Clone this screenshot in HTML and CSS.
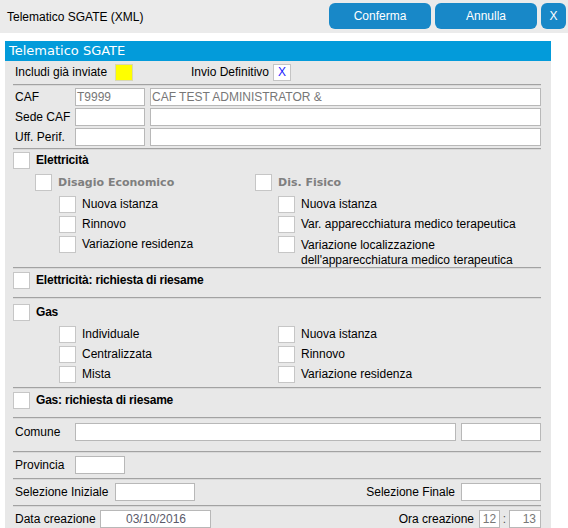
FILE: index.html
```html
<!DOCTYPE html>
<html lang="it">
<head>
<meta charset="utf-8">
<title>Telematico SGATE (XML)</title>
<link rel="stylesheet" href="styles.css">
</head>
<body>
<div class="topbar">
  <div class="title">Telematico SGATE (XML)</div>
  <div class="buttons">
    <button class="btn btn-wide">Conferma</button>
    <button class="btn btn-wide">Annulla</button>
    <button class="btn btn-x">X</button>
  </div>
</div>

<div class="panel">
  <div class="panel-head">Telematico SGATE</div>
  <div class="panel-body">
    <div class="row row-first">
      <span class="lbl w-includi">Includi già inviate</span>
      <span class="box box-yellow"></span>
      <span class="lbl w-invio">Invio Definitivo</span>
      <span class="box box-x">X</span>
    </div>
    <div class="sep sep-a"></div>

    <div class="fields">
      <div class="frow">
        <span class="flabel">CAF</span>
        <span class="inp inp-code">T9999</span>
        <span class="inp inp-grow">CAF TEST ADMINISTRATOR &amp;</span>
      </div>
      <div class="frow">
        <span class="flabel">Sede CAF</span>
        <span class="inp inp-code"></span>
        <span class="inp inp-grow"></span>
      </div>
      <div class="frow">
        <span class="flabel">Uff. Perif.</span>
        <span class="inp inp-code"></span>
        <span class="inp inp-grow"></span>
      </div>
    </div>
    <div class="sep sep-b"></div>

    <div class="check main mt2"><span class="cb"></span><b>Elettricità</b></div>
    <div class="cols mt5">
      <div class="col col-left">
        <div class="check group"><span class="cb"></span><span class="gtitle">Disagio Economico</span></div>
        <div class="subs">
          <div class="check sub"><span class="cb"></span><span>Nuova istanza</span></div>
          <div class="check sub"><span class="cb"></span><span>Rinnovo</span></div>
          <div class="check sub"><span class="cb"></span><span>Variazione residenza</span></div>
        </div>
      </div>
      <div class="col col-right">
        <div class="check group"><span class="cb"></span><span class="gtitle">Dis. Fisico</span></div>
        <div class="subs">
          <div class="check sub"><span class="cb"></span><span>Nuova istanza</span></div>
          <div class="check sub"><span class="cb"></span><span>Var. apparecchiatura medico terapeutica</span></div>
          <div class="check sub multi"><span class="cb"></span><span>Variazione localizzazione<br>dell'apparecchiatura medico terapeutica</span></div>
        </div>
      </div>
    </div>
    <div class="sep sep-c"></div>

    <div class="check main mt3"><span class="cb"></span><b>Elettricità: richiesta di riesame</b></div>
    <div class="sep sep-d"></div>

    <div class="check main mt5"><span class="cb"></span><b>Gas</b></div>
    <div class="cols gascols">
      <div class="col col-left">
        <div class="subs nomt">
          <div class="check sub"><span class="cb"></span><span>Individuale</span></div>
          <div class="check sub"><span class="cb"></span><span>Centralizzata</span></div>
          <div class="check sub"><span class="cb"></span><span>Mista</span></div>
        </div>
      </div>
      <div class="col col-right">
        <div class="subs nomt">
          <div class="check sub"><span class="cb"></span><span>Nuova istanza</span></div>
          <div class="check sub"><span class="cb"></span><span>Rinnovo</span></div>
          <div class="check sub"><span class="cb"></span><span>Variazione residenza</span></div>
        </div>
      </div>
    </div>
    <div class="sep sep-e"></div>

    <div class="check main mt3"><span class="cb"></span><b>Gas: richiesta di riesame</b></div>
    <div class="sep sep-f"></div>

    <div class="frow comune">
      <span class="flabel">Comune</span>
      <span class="inp inp-grow"></span>
      <span class="inp inp-80 ml5"></span>
    </div>
    <div class="sep sep-g"></div>

    <div class="frow mt3">
      <span class="flabel">Provincia</span>
      <span class="inp inp-prov"></span>
    </div>
    <div class="sep sep-h"></div>

    <div class="frow mt3">
      <span class="flabel lbl-sel">Selezione Iniziale</span>
      <span class="inp inp-80"></span>
      <span class="spacer"></span>
      <span class="flabel-r">Selezione Finale</span>
      <span class="inp inp-80"></span>
    </div>
    <div class="sep sep-h"></div>

    <div class="frow mt3">
      <span class="flabel lbl-data">Data creazione</span>
      <span class="inp inp-date">03/10/2016</span>
      <span class="spacer"></span>
      <span class="flabel-r lbl-ora">Ora creazione</span>
      <span class="inp inp-hh">12</span>
      <span class="colon">:</span>
      <span class="inp inp-mm">13</span>
    </div>
  </div>
</div>
</body>
</html>
```

FILE: styles.css
```css
* { box-sizing: border-box; }
html, body { margin: 0; padding: 0; background: #ffffff; }
body {
  font-family: "Liberation Sans", Arial, sans-serif;
  font-size: 12px;
  color: #000;
  width: 568px;
  height: 528px;
  overflow: hidden;
}

.topbar {
  height: 33px;
  background: #ebebeb;
  display: flex;
  align-items: flex-start;
  justify-content: space-between;
}
.title { padding: 10px 0 0 7px; line-height: 14px; }
.buttons { display: flex; gap: 4px; padding: 3px 2px 0 0; }
.btn {
  height: 26px;
  border: 0;
  border-radius: 6px;
  background: #1888c8;
  color: #fff;
  font-family: "Liberation Sans", Arial, sans-serif;
  font-size: 12px;
  padding: 0;
  line-height: 26px;
}
.btn-wide { width: 102px; }
.btn-x { width: 25px; }

.panel { margin: 8px 0 0 5px; width: 546px; }
.panel-head {
  height: 20px;
  background: #039bda;
  color: #fff;
  font-family: "DejaVu Sans", Verdana, sans-serif;
  font-size: 13px;
  line-height: 20px;
  padding-left: 4px;
}
.panel-body {
  background: #e8e8e8;
  padding: 3px 10px 10px 8px;
}

.row { display: flex; align-items: center; height: 17px; }
.lbl { padding-left: 2px; line-height: 17px; }
.w-includi { width: 102px; }
.w-invio { width: 84px; margin-left: 56px; }
.box { width: 18px; height: 17px; border: 1px solid #c4c4c4; display: inline-block; }
.box-yellow { background: #ffff00; border-color: #d8d8b0; }
.box-x { background: #fff; color: #1c1cff; text-align: center; line-height: 15px; font-size: 12px; }

.sep { border-top: 1px solid #a2a2a2; border-bottom: 1px solid #d9d9d9; height: 2px; }
.sep-a { margin-top: 3px; }
.sep-b { margin-top: 2px; }
.sep-c { margin-top: -1px; }
.sep-d { margin-top: 8px; }
.sep-e { margin-top: 4px; }
.sep-f { margin-top: 8px; }
.sep-g { margin-top: 10px; }
.sep-h { margin-top: 4px; }

.fields { margin-top: 2px; display: flex; flex-direction: column; gap: 2px; }
.frow { display: flex; align-items: center; height: 18px; }
.flabel { width: 62px; padding-left: 2px; flex: none; }
.lbl-sel { width: 102px; }
.lbl-data { width: 87px; }
.flabel-r { margin-right: 6px; }
.lbl-ora { margin-right: 5px; }
.inp {
  height: 18px;
  background: #fff;
  border: 1px solid #b8b8b8;
  color: #777;
  line-height: 16px;
  padding-left: 1px;
  flex: none;
  white-space: nowrap;
}
.inp-code { width: 70px; margin-right: 5px; }
.inp-grow { flex: 1 1 auto; }
.inp-80 { width: 80px; }
.inp-prov { width: 50px; }
.inp-date { width: 111px; text-align: center; color: #5a5a6a; }
.inp-hh { width: 21px; text-align: center; padding: 0; }
.inp-mm { width: 32px; text-align: right; padding: 0 4px 0 0; }
.colon { width: 9px; text-align: center; color: #555; }
.ml5 { margin-left: 5px; }
.spacer { flex: 1 1 auto; }
.comune { margin-top: 4px; }

.mt2 { margin-top: 2px; }
.mt3 { margin-top: 3px; }
.mt4 { margin-top: 4px; }
.mt5 { margin-top: 5px; }

.check { display: flex; align-items: flex-start; }
.cb {
  width: 17px;
  height: 17px;
  background: #fff;
  border: 1px solid #c6c6c6;
  flex: none;
}
.check.main { height: 17px; }
.check.main b {
  font-weight: bold;
  margin-left: 6px;
  line-height: 17px;
  letter-spacing: -0.2px;
}
.cols { display: flex; }
.col-left { width: 242px; padding-left: 22px; }
.col-right { flex: 1; }
.gascols { margin-top: 5px; }
.gascols .col-left { padding-left: 46px; }
.gascols .col-right { padding-left: 23px; }
.group .gtitle {
  font-family: "DejaVu Sans", Verdana, sans-serif;
  font-weight: bold;
  font-size: 11px;
  color: #7f7f7f;
  margin-left: 6px;
  line-height: 17px;
}
.subs { margin-top: 5px; padding-left: 24px; display: flex; flex-direction: column; gap: 3px; }
.col-right .subs { padding-left: 23px; }
.subs.nomt { margin-top: 0; padding-left: 0 !important; }
.check.sub span:last-child { margin-left: 6px; line-height: 17px; }
.check.sub.multi span:last-child { line-height: 15px; padding-top: 2px; }
```
